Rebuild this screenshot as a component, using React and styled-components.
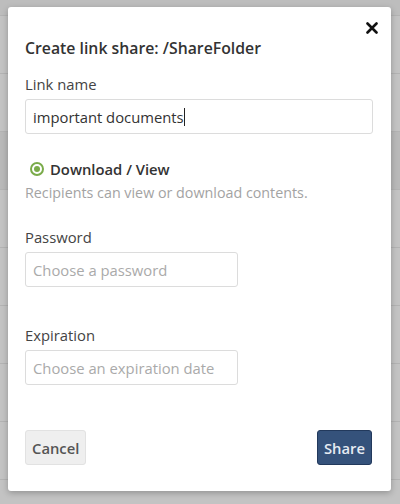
import React from 'react';
import styled, { createGlobalStyle } from 'styled-components';

const GlobalStyle = createGlobalStyle`
  html, body {
    margin: 0;
    padding: 0;
    width: 400px;
    height: 504px;
    overflow: hidden;
    background: #c3c3c3;
    font-family: "Open Sans", "Noto Sans", sans-serif;
  }
`;

const Page = styled.div`
  width: 400px;
  height: 504px;
  position: relative;
  overflow: hidden;
`;

const PageHeader = styled.div`
  height: 15px;
  background: #bdbdbd;
  border-bottom: 1px solid #b3b3b3;
`;

const Row = styled.div`
  height: 57px;
  border-bottom: 1px solid #b3b3b3;
  background: ${p => (p.$active ? '#b9b9b9' : '#c3c3c3')};
`;

const Overlay = styled.div`
  position: absolute;
  inset: 0;
  display: flex;
  justify-content: flex-start;
  padding: 7px 0 0 8px;
`;

const Modal = styled.div`
  width: 383px;
  height: 484px;
  box-sizing: border-box;
  background: #fff;
  border-radius: 3px;
  box-shadow: 0 2px 6px rgba(0, 0, 0, 0.25);
  padding: 10px 18px 0 17px;
  display: flex;
  flex-direction: column;
  position: relative;
`;

const Close = styled.button`
  position: absolute;
  top: 11px;
  right: 9px;
  width: 20px;
  height: 20px;
  border: none;
  background: none;
  padding: 0;
  display: flex;
  align-items: center;
  justify-content: center;
  cursor: pointer;
`;

const Title = styled.h4`
  margin: 21px 0 0;
  font-size: 15.8px;
  font-weight: 600;
  color: #333;
  line-height: 21px;
`;

const Label = styled.label`
  display: block;
  font-size: 14.8px;
  color: #444;
  line-height: 20px;
  margin-top: ${p => p.$top || 0}px;
`;

const Input = styled.input`
  box-sizing: border-box;
  display: block;
  width: ${p => p.$width || '100%'};
  height: 35px;
  margin-top: 5px;
  padding: 0 7px;
  border: 1px solid #dcdcdc;
  border-radius: 3px;
  font-family: inherit;
  font-size: 14.8px;
  color: #333;
  outline: none;

  &::placeholder {
    color: #aaa;
  }
`;

const RadioRow = styled.div`
  display: flex;
  align-items: center;
  gap: 6px;
  margin-top: 25px;
  padding-left: 5px;
  font-size: 14.8px;
  font-weight: 600;
  color: #333;
  line-height: 20px;
`;

const Radio = styled.span`
  width: 14px;
  height: 14px;
  box-sizing: border-box;
  border: 2px solid #7aab4a;
  border-radius: 50%;
  display: flex;
  align-items: center;
  justify-content: center;

  &::after {
    content: '';
    width: 6px;
    height: 6px;
    border-radius: 50%;
    background: #7aab4a;
  }
`;

const Help = styled.p`
  margin: 4px 0 0;
  font-size: 14.3px;
  color: #a3a3a3;
  line-height: 20px;
`;

const Footer = styled.div`
  display: flex;
  justify-content: space-between;
  margin-top: auto;
  margin-bottom: 26px;
  padding-right: 1px;
`;

const Button = styled.button`
  height: 35px;
  padding: 0 6px;
  border-radius: 3px;
  font-family: inherit;
  font-size: 14.8px;
  font-weight: 600;
  cursor: pointer;
  border: 1px solid ${p => (p.$primary ? '#22395c' : '#e2e2e2')};
  background: ${p => (p.$primary ? '#35527b' : '#efefef')};
  color: ${p => (p.$primary ? '#e6ebf2' : '#555')};
`;

const Caret = styled.span`
  display: inline-block;
  width: 1px;
  height: 18px;
  background: #222;
  vertical-align: middle;
`;

const FakeInput = styled.div`
  box-sizing: border-box;
  height: 35px;
  margin-top: 5px;
  padding: 0 7px;
  border: 1px solid #dcdcdc;
  border-radius: 3px;
  font-size: 14.8px;
  color: #333;
  display: flex;
  align-items: center;
`;

export default function App() {
  const rows = [0, 1, 2, 3, 4, 5, 6, 7];
  return (
    <Page>
      <GlobalStyle />
      <PageHeader />
      {rows.map(i => (
        <Row key={i} $active={i === 2} />
      ))}
      <Overlay>
        <Modal>
          <Close aria-label="Close">
            <svg width="12" height="12" viewBox="0 0 12 12">
              <path d="M1.5 1.5 L10.5 10.5 M10.5 1.5 L1.5 10.5" stroke="#111" strokeWidth="2.6" strokeLinecap="round" />
            </svg>
          </Close>
          <Title>Create link share: /ShareFolder</Title>
          <Label $top={15}>Link name</Label>
          <FakeInput>
            important documents<Caret />
          </FakeInput>
          <RadioRow>
            <Radio />
            Download / View
          </RadioRow>
          <Help>Recipients can view or download contents.</Help>
          <Label $top={24}>Password</Label>
          <Input $width="213px" placeholder="Choose a password" />
          <Label $top={38}>Expiration</Label>
          <Input $width="213px" placeholder="Choose an expiration date" />
          <Footer>
            <Button>Cancel</Button>
            <Button $primary>Share</Button>
          </Footer>
        </Modal>
      </Overlay>
    </Page>
  );
}
